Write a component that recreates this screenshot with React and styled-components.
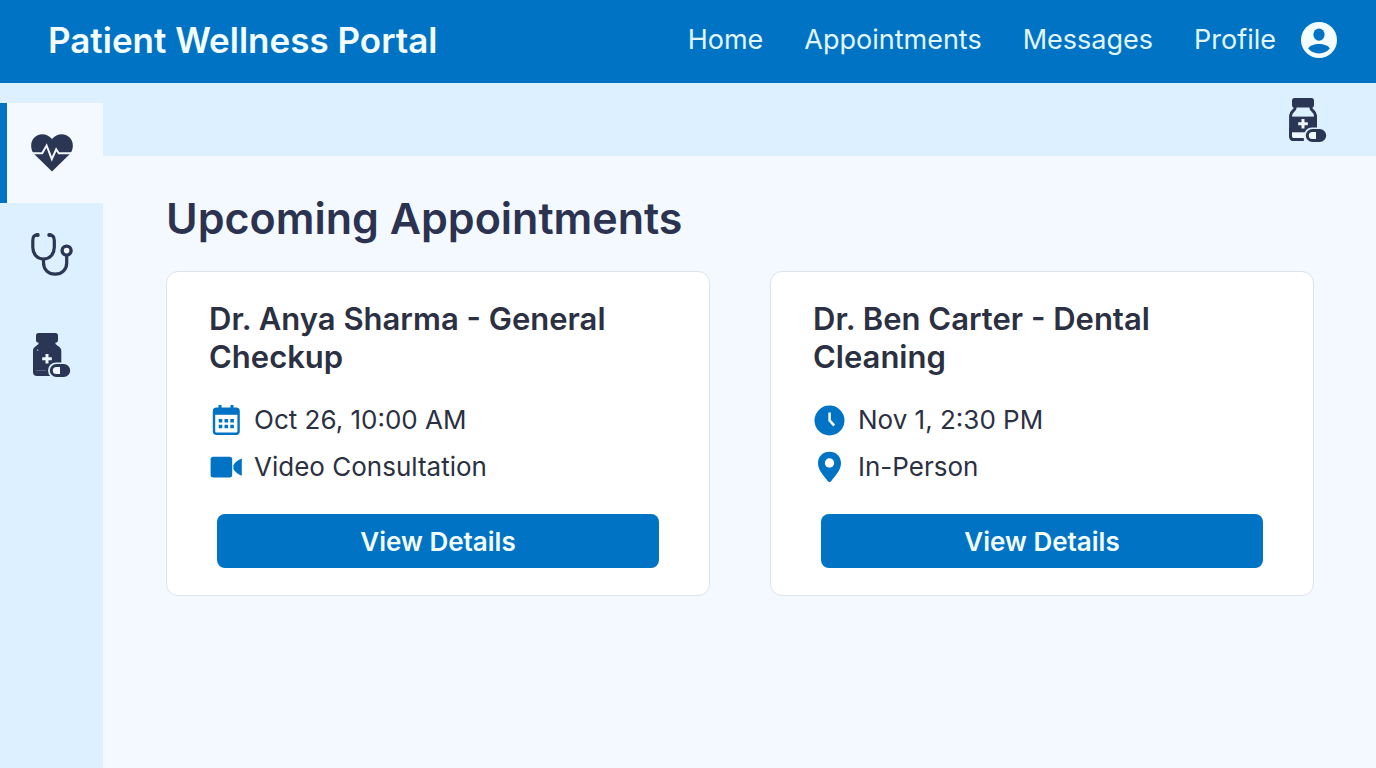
import React, { useState } from 'react';
import styled, { createGlobalStyle } from 'styled-components';

const GlobalStyle = createGlobalStyle`
    * {
        box-sizing: border-box;
    }
    body {
        margin: 0;
        font-family: Inter, 'Liberation Sans', sans-serif;
        color: #2b3042;
        background-color: #f4f9ff;
    }
    h1, h2, p, ul {
        margin: 0;
        padding: 0;
    }
    ul {
        list-style: none;
    }
    svg {
        display: block;
    }
`
const Page = styled.div`
    display: flex;
    flex-direction: column;
    min-height: 100vh;
`
const Header = styled.header`
    display: flex;
    align-items: center;
    justify-content: space-between;
    padding: 19px 39px 22px 48px;
    background-color: #0073c5;
`
const Brand = styled.div`
    font-size: 35px;
    font-weight: 600;
    line-height: 42px;
    color: #f3fcff;
`
const Nav = styled.nav`
    display: flex;
    align-items: center;
    gap: 41px;
    a {
        font-size: 27px;
        line-height: 42px;
        color: #e2f6ff;
        text-decoration: none;
    }
    .profile {
        display: flex;
        align-items: center;
        gap: 25px;
    }
`
const Body = styled.div`
    display: flex;
    flex: 1;
`
const Sidebar = styled.aside`
    display: flex;
    flex-direction: column;
    flex: none;
    gap: 1px;
    width: 103px;
    padding-top: 20px;
    background-color: #ddf0ff;
`
const SideButton = styled.button`
    display: flex;
    align-items: center;
    justify-content: center;
    height: 100px;
    padding: 0 7px 0 0;
    border: 0;
    border-left: 7px solid ${({ $active }) => ($active ? '#0073c5' : 'transparent')};
    background-color: ${({ $active }) => ($active ? '#f4f9ff' : 'transparent')};
    color: #2b3554;
    cursor: pointer;
`
const Content = styled.div`
    flex: 1;
    min-width: 0;
`
const Toolbar = styled.div`
    display: flex;
    align-items: center;
    justify-content: flex-end;
    height: 73px;
    padding: 0 49px;
    background-color: #ddf0ff;
`
const ToolButton = styled.button`
    padding: 0;
    border: 0;
    background: none;
    color: #2b3554;
    cursor: pointer;
`
const Main = styled.main`
    padding: 36px 62px 36px 63px;
`
const Title = styled.h1`
    font-size: 43px;
    font-weight: 600;
    line-height: 52px;
    color: #2b3350;
`
const CardGrid = styled.div`
    display: grid;
    grid-template-columns: 1fr 1fr;
    gap: 60px;
    margin-top: 27px;
`
const Card = styled.section`
    display: flex;
    flex-direction: column;
    padding: 28px 42px 27px;
    border: 1px solid #dbe3ec;
    border-radius: 12px;
    background-color: #fff;
`
const CardTitle = styled.h2`
    font-size: 31px;
    font-weight: 600;
    line-height: 38px;
`
const InfoList = styled.ul`
    display: flex;
    flex-direction: column;
    gap: 15px;
    margin-top: 28px;
`
const InfoRow = styled.li`
    display: flex;
    align-items: center;
    gap: 11px;
    font-size: 26px;
    line-height: 32px;
    svg {
        flex: none;
        color: #0073c5;
    }
`
const DetailsButton = styled.button`
    height: 54px;
    margin: 31px 8px 0;
    border: 0;
    border-radius: 8px;
    background-color: #0073c5;
    font-family: inherit;
    font-size: 26px;
    font-weight: 600;
    color: #f3fcff;
    cursor: pointer;
`

const UserIcon = () => (
    <svg width="36" height="36" viewBox="0 0 36 36" aria-hidden="true">
        <circle cx="18" cy="18" r="18" fill="#f3fcff" />
        <ellipse cx="18" cy="12.6" rx="5.6" ry="6.2" fill="#0073c5" />
        <path d="M7.2 26.6C8.6 23.6 13.2 22 18 22s9.400 1.600 10.800 4.600C26.600 29.800 22.600 31.400 18 31.400S9.400 29.800 7.200 26.600z" fill="#0073c5" />
    </svg>
)

const HeartIcon = () => (
    <svg width="42" height="38" viewBox="0 0 42 38" aria-hidden="true">
        <path d="M21 37.600 3.600 20.600C-1.200 15.500-.8 7.200 3.600 3.200 8.600-1.300 16.400-.6 21 5c4.600-5.600 12.400-6.300 17.400-1.800 4.400 4 4.800 12.300 0 17.400z" fill="currentColor" />
        <path d="M0 19.300h11.200l4.400-7.800 5.200 13.600 4.400-9.800 2.600 4H42" fill="none" stroke="#f4f9ff" strokeWidth="2" strokeLinejoin="miter" />
    </svg>
)

const StethoscopeIcon = () => (
    <svg width="42" height="43" viewBox="0 0 42 43" fill="none" stroke="currentColor" strokeWidth="3.200" strokeLinecap="round" aria-hidden="true">
        <path d="M6.600 1.900C3 1.900 1.800 3.800 1.800 7.500v6.800c0 7 4.500 11.700 10.700 11.700s10.800-4.700 10.800-11.700V7.500c0-3.700-1.500-5.600-5-5.600" />
        <path d="M12.500 26.500v3.300c0 6.800 5 11.400 11.600 11.400s11.600-4.500 11.600-11.300v-6.500" />
        <path d="M6.300 2h.4M18.300 2h.4" strokeWidth="4" />
        <circle cx="35.600" cy="17.600" r="4.500" strokeWidth="3.400" fill="#f4f9ff" />
    </svg>
)

const BottleIcon = ({ open }) => (
    <svg width="38" height="44" viewBox="0 0 38 44" aria-hidden="true">
        <rect x="3" y="0" width="22" height="9.600" rx="2.600" fill="currentColor" />
        {open ? (
            <>
                <path d="M6 9v1.200c0 2.200-4.400 3-4.400 7.300v20.700c0 2.300 1.200 3.400 3.400 3.400h9.600M22 9v1.200c0 2.200 4.500 3 4.500 7.300v9" fill="none" stroke="currentColor" strokeWidth="3" />
                <path d="M2 34h14v6H5c-2 0-3-1-3-3z" fill="#eef7ff" />
                <path d="M1.600 30v8.200c0 2.300 1.200 3.400 3.400 3.400h9.600" fill="none" stroke="currentColor" strokeWidth="2.800" />
                <path d="M1 18.600h27V34.300H1z" fill="currentColor" />
            </>
        ) : (
            <>
                <path d="M5.500 9h17v1.500c0 2 5.800 2.600 5.800 7.500v21c0 2.600-1.400 4-4 4H4c-2.600 0-4-1.400-4-4V18c0-4.900 5.500-5.500 5.500-7.500z" fill="currentColor" />
                <path d="M3 37.500h10" stroke="#566080" strokeWidth="1" />
                <circle cx="4.600" cy="17.200" r=".9" fill="#8e9ab8" />
            </>
        )}
        <path d="M14 21v9.600M9.200 25.800h9.600" stroke="#eef7ff" strokeWidth="3" />
        <rect x="15" y="29.500" width="25" height="16" rx="8" fill="#ddf0ff" />
        <rect x="18.300" y="32.500" width="17.400" height="10" rx="5" fill="#eef7ff" stroke="currentColor" strokeWidth="3" />
        <path d="M27 32.500h4a5 5 0 0 1 0 10h-4z" fill="currentColor" />
    </svg>
)

const CalendarIcon = () => (
    <svg width="34" height="32" viewBox="0 0 34 32" aria-hidden="true">
        <path d="M11 1v5M23 1v5" stroke="currentColor" strokeWidth="3" />
        <rect x="5" y="4.700" width="24.600" height="25" rx="2.500" fill="none" stroke="currentColor" strokeWidth="2.400" />
        <path d="M5 4.500h24.600v6.300H5z" fill="currentColor" />
        <path d="M9.700 16.800h15.300M9.700 22.600h15.300" stroke="currentColor" strokeWidth="3.500" strokeDasharray="3.600 2.200" />
    </svg>
)

const VideoIcon = () => (
    <svg width="34" height="32" viewBox="0 0 34 32" fill="currentColor" aria-hidden="true">
        <rect x="1.600" y="5.800" width="21.600" height="20.600" rx="2.600" />
        <path d="M24.400 14.200Q27 9.500 32.800 7.500v17.200Q27 23 24.400 18.100z" />
    </svg>
)

const ClockIcon = () => (
    <svg width="34" height="32" viewBox="0 0 34 32" aria-hidden="true">
        <circle cx="16.500" cy="16.500" r="15" fill="currentColor" />
        <path d="M16.600 8.500v8l4.600 5" fill="none" stroke="#eef8ff" strokeWidth="2.600" />
    </svg>
)

const PinIcon = () => (
    <svg width="34" height="32" viewBox="1 0 34 32" aria-hidden="true">
        <path d="M17.500.8C10.900.8 6 5.600 6 12c0 7.600 6 12.700 9.700 18 1 1.500 2.600 1.500 3.600 0C23 24.700 29 19.600 29 12 29 5.600 24.100.8 17.500.8z" fill="currentColor" />
        <circle cx="17.500" cy="12" r="4.700" fill="#fff" />
    </svg>
)

const sideItems = [
    { name: 'Vitals', icon: <HeartIcon /> },
    { name: 'Doctors', icon: <StethoscopeIcon /> },
    { name: 'Medications', icon: <BottleIcon /> },
]

const appointments = [
    {
        title: 'Dr. Anya Sharma - General Checkup',
        info: [
            { icon: <CalendarIcon />, text: 'Oct 26, 10:00 AM' },
            { icon: <VideoIcon />, text: 'Video Consultation' },
        ],
    },
    {
        title: 'Dr. Ben Carter - Dental Cleaning',
        info: [
            { icon: <ClockIcon />, text: 'Nov 1, 2:30 PM' },
            { icon: <PinIcon />, text: 'In-Person' },
        ],
    },
]

const AppointmentCard = ({ obj }) => (
    <Card>
        <CardTitle>{obj.title}</CardTitle>
        <InfoList>
            {obj.info.map((row, i) => (
                <InfoRow key={i}>
                    {row.icon}
                    <span>{row.text}</span>
                </InfoRow>
            ))}
        </InfoList>
        <DetailsButton type="button">View Details</DetailsButton>
    </Card>
)

const App = () => {
    const [active, setActive] = useState(0);

    return (
        <Page>
            <GlobalStyle />
            <Header>
                <Brand>Patient Wellness Portal</Brand>
                <Nav>
                    <a href="#home">Home</a>
                    <a href="#appointments">Appointments</a>
                    <a href="#messages">Messages</a>
                    <a href="#profile" className="profile">
                        Profile
                        <UserIcon />
                    </a>
                </Nav>
            </Header>
            <Body>
                <Sidebar>
                    {sideItems.map((item, i) => (
                        <SideButton
                            key={item.name}
                            type="button"
                            aria-label={item.name}
                            $active={active === i}
                            onClick={() => setActive(i)}
                        >
                            {item.icon}
                        </SideButton>
                    ))}
                </Sidebar>
                <Content>
                    <Toolbar>
                        <ToolButton type="button" aria-label="Prescriptions">
                            <BottleIcon open />
                        </ToolButton>
                    </Toolbar>
                    <Main>
                        <Title>Upcoming Appointments</Title>
                        <CardGrid>
                            {appointments.map((list, i) => (
                                <AppointmentCard key={i} obj={list} />
                            ))}
                        </CardGrid>
                    </Main>
                </Content>
            </Body>
        </Page>
    );
};

export default App;
